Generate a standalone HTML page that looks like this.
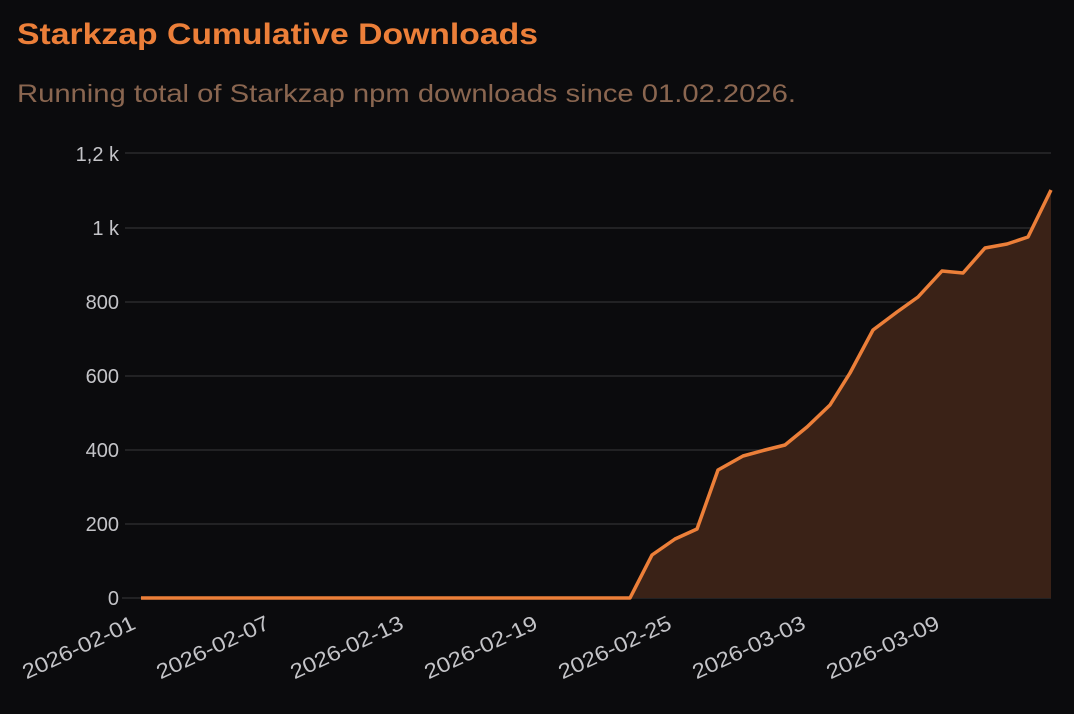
<!DOCTYPE html>
<html><head><meta charset="utf-8"><style>
html,body{margin:0;padding:0;background:#0b0b0d;width:1074px;height:714px;overflow:hidden}
</style></head><body>
<svg width="1074" height="714" xmlns="http://www.w3.org/2000/svg" style="display:block">
<rect width="1074" height="714" fill="#0b0b0d"/>
<text x="17" y="44" font-family="Liberation Sans, sans-serif" font-size="30" font-weight="bold" fill="#ec7f39" textLength="521" lengthAdjust="spacingAndGlyphs">Starkzap Cumulative Downloads</text>
<text x="17" y="102" font-family="Liberation Sans, sans-serif" font-size="25" fill="#8a6650" textLength="779" lengthAdjust="spacingAndGlyphs">Running total of Starkzap npm downloads since 01.02.2026.</text>
<g stroke="#2a2a2d" stroke-width="1.5">
<line x1="125" y1="153" x2="1051" y2="153"/>
<line x1="125" y1="228" x2="1051" y2="228"/>
<line x1="125" y1="302" x2="1051" y2="302"/>
<line x1="125" y1="376" x2="1051" y2="376"/>
<line x1="125" y1="450" x2="1051" y2="450"/>
<line x1="125" y1="524" x2="1051" y2="524"/>
<line x1="122" y1="598" x2="1051" y2="598"/>
</g>
<g font-family="Liberation Sans, sans-serif" font-size="20" fill="#c4c4c8" text-anchor="end">
<text x="119" y="161">1,2 k</text>
<text x="119" y="235">1 k</text>
<text x="119" y="309">800</text>
<text x="119" y="383">600</text>
<text x="119" y="457">400</text>
<text x="119" y="531">200</text>
<text x="119" y="605">0</text>
</g>
<path d="M141,598 L630,598 L652,555 L675,539 L697,529 L718,470 L743,456 L765,450 L785,445 L807,427 L830,405 L850,373 L873,330 L897,312 L918,297 L942,271 L963,273 L985,248 L1007,244 L1028,237 L1051,190 L1051,598 Z" fill="#3a2217"/>
<path d="M141,598 L630,598 L652,555 L675,539 L697,529 L718,470 L743,456 L765,450 L785,445 L807,427 L830,405 L850,373 L873,330 L897,312 L918,297 L942,271 L963,273 L985,248 L1007,244 L1028,237 L1051,190" fill="none" stroke="#ec7f39" stroke-width="3.5" stroke-linejoin="round"/>
<g font-family="Liberation Sans, sans-serif" font-size="21" fill="#c4c4c8" text-anchor="end">
<text transform="translate(137,628) rotate(-25)" textLength="122" lengthAdjust="spacingAndGlyphs">2026-02-01</text>
<text transform="translate(271,628) rotate(-25)" textLength="122" lengthAdjust="spacingAndGlyphs">2026-02-07</text>
<text transform="translate(405,628) rotate(-25)" textLength="122" lengthAdjust="spacingAndGlyphs">2026-02-13</text>
<text transform="translate(539,628) rotate(-25)" textLength="122" lengthAdjust="spacingAndGlyphs">2026-02-19</text>
<text transform="translate(673,628) rotate(-25)" textLength="122" lengthAdjust="spacingAndGlyphs">2026-02-25</text>
<text transform="translate(807,628) rotate(-25)" textLength="122" lengthAdjust="spacingAndGlyphs">2026-03-03</text>
<text transform="translate(941,628) rotate(-25)" textLength="122" lengthAdjust="spacingAndGlyphs">2026-03-09</text>
</g>
</svg>
</body></html>
